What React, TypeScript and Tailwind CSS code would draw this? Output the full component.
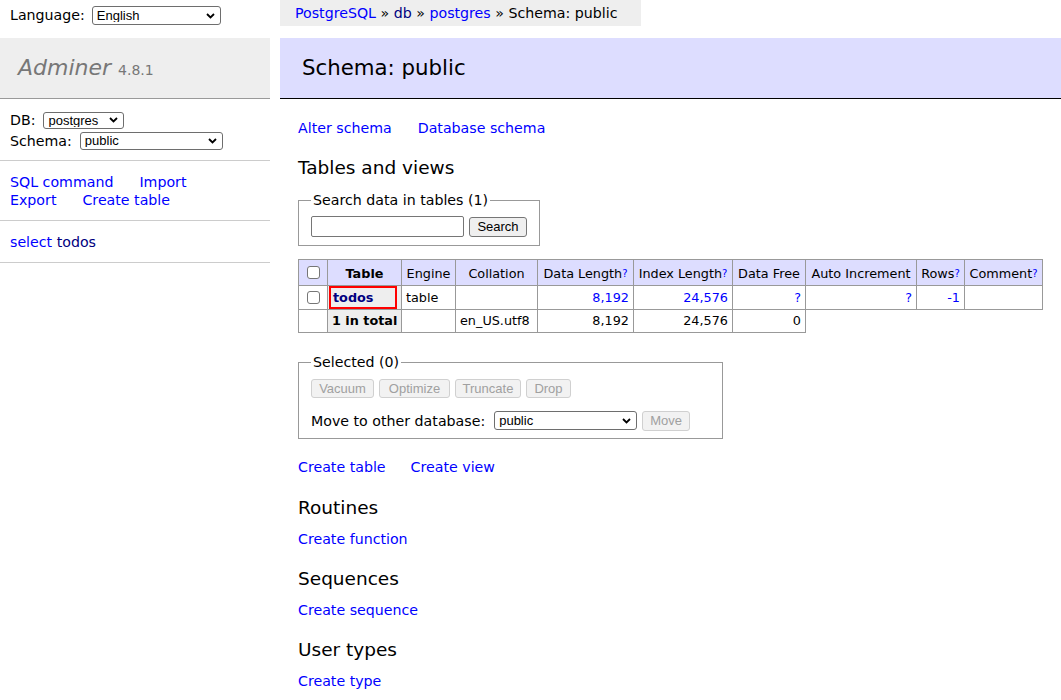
import React from 'react';

// Adminer "Schema: public" page

const ctl = "font-['Liberation_Sans',Arial,sans-serif] text-[13px]";

function Select({ value, className }: { value: string; className: string }) {
  return (
    <span className="relative inline-block align-middle">
      <select
        defaultValue={value}
        className={`appearance-none block bg-white border border-[#6e6e6e] rounded-[3px] pl-[4px] pr-[18px] leading-none text-black ${ctl} ${className}`}
      >
        <option>{value}</option>
      </select>
      <svg
        className="absolute right-[6px] top-1/2 -translate-y-1/2 pointer-events-none"
        width="9"
        height="6"
        viewBox="0 0 9 6"
      >
        <path d="M1 1l3.5 3.5L8 1" fill="none" stroke="#000" strokeWidth="1.8" />
      </svg>
    </span>
  );
}

function Button({ label, disabled, className }: { label: string; disabled?: boolean; className: string }) {
  return (
    <button
      disabled={disabled}
      className={`inline-flex items-center justify-center rounded-[3px] border align-middle ${ctl} ${
        disabled ? 'border-[#d0d0d0] text-[#a0a0a0] bg-[#f2f2f2]' : 'border-[#767676] text-black bg-[#efefef]'
      } ${className}`}
    >
      {label}
    </button>
  );
}

function Checkbox() {
  return (
    <input
      type="checkbox"
      className="appearance-none block w-[13px] h-[13px] border border-[#767676] rounded-[3px] bg-white"
    />
  );
}

const Help = () => <sup className="text-[#00f] text-[10px] relative -top-[1px]">?</sup>;

export default function App() {
  const td = 'border border-[#999] px-[4px] py-0';
  const num = `${td} text-right text-[#00f]`;

  return (
    <div className="flex min-h-[700px] w-[1061px] bg-white text-black text-[14.2px] leading-[18px] font-['DejaVu_Sans',Verdana,sans-serif]">
      {/* ---- left menu ---- */}
      <div className="w-[270px] shrink-0 flex flex-col">
        <div className="h-[38px] flex items-start gap-[7px] pt-[6px] px-[10px]">
          <span className="leading-[19px]">Language:</span>
          <Select value="English" className="w-[129px] h-[19px]" />
        </div>

        <div className="h-[61px] bg-[#eee] border-b border-[#999] flex items-center px-[18px] text-[#777]">
          <span className="italic text-[22px]">Adminer</span>
          <span className="text-[14px] ml-[7px] mt-[4px]">4.8.1</span>
        </div>

        <div className="pt-[12px] pb-[10px] px-[10px] border-b border-[#ccc] flex flex-col gap-[2px]">
          <div className="flex items-center h-[18px] gap-[8px]">
            DB: <Select value="postgres" className="w-[81px] h-[17px]" />
          </div>
          <div className="flex items-center h-[19px] gap-[8px]">
            Schema: <Select value="public" className="w-[143px] h-[18px]" />
          </div>
        </div>

        <div className="pt-[12px] pb-[11px] px-[10px] border-b border-[#ccc]">
          <div className="flex gap-[26px]">
            <a className="text-[#00f]">SQL command</a>
            <a className="text-[#00f]">Import</a>
          </div>
          <div className="flex gap-[26px]">
            <a className="text-[#00f]">Export</a>
            <a className="text-[#00f]">Create table</a>
          </div>
        </div>

        <div className="pt-[12px] pb-[11px] px-[10px] border-b border-[#ccc]">
          <a className="text-[#00f]">select</a> <a className="text-[#000080]">todos</a>
        </div>
      </div>

      {/* ---- content ---- */}
      <div className="flex-1 ml-[10px] flex flex-col items-start">
        <div className="h-[26px] w-[361px] bg-[#eee] flex items-center px-[15px] whitespace-nowrap">
          <a className="text-[#00f]">PostgreSQL</a>&nbsp;»&nbsp;<a className="text-[#000080]">db</a>&nbsp;»&nbsp;
          <a className="text-[#00f]">postgres</a>&nbsp;» Schema: public
        </div>

        <h2 className="mt-[12px] self-stretch h-[61px] bg-[#ddf] border-b border-black flex items-center px-[22px] text-[21.3px]">
          Schema: public
        </h2>

        <div className="pl-[18px] flex flex-col items-start">
          <div className="mt-[20px] flex gap-[26px]">
            <a className="text-[#00f]">Alter schema</a>
            <a className="text-[#00f]">Database schema</a>
          </div>

          <h3 className="mt-[19px] text-[18.5px] leading-[23px]">Tables and views</h3>

          <fieldset className="mt-[12px] border border-[#999] px-[12px] pb-[8px] w-[242px]">
            <legend className="px-[2px] leading-[18px]">Search data in tables (1)</legend>
            <div className="mt-[7px] flex items-center gap-[5px]">
              <input className={`w-[153px] h-[21px] border border-[#767676] rounded-[2px] bg-white text-black ${ctl}`} />
              <Button label="Search" className="w-[58px] h-[20px]" />
            </div>
          </fieldset>

          <table className="mt-[13px] table-fixed border-collapse w-[744px] text-[12.8px]">
            <colgroup>
              <col className="w-[29px]" />
              <col className="w-[74px]" />
              <col className="w-[54px]" />
              <col className="w-[82px]" />
              <col className="w-[96px]" />
              <col className="w-[99px]" />
              <col className="w-[73px]" />
              <col className="w-[111px]" />
              <col className="w-[48px]" />
              <col className="w-[78px]" />
            </colgroup>
            <thead>
              <tr className="h-[26px] bg-[#ddf]">
                <td className={td}>
                  <div className="flex justify-center"><Checkbox /></div>
                </td>
                <th className={`${td} font-bold text-center pt-[3px]`}>Table</th>
                <th className={`${td} font-normal text-center pt-[3px]`}>Engine</th>
                <th className={`${td} font-normal text-center pt-[3px]`}>Collation</th>
                <th className={`${td} font-normal text-center whitespace-nowrap pt-[3px]`}>Data Length<Help /></th>
                <th className={`${td} font-normal text-center whitespace-nowrap pt-[3px]`}>Index Length<Help /></th>
                <th className={`${td} font-normal text-center whitespace-nowrap pt-[3px]`}>Data Free</th>
                <th className={`${td} font-normal text-center whitespace-nowrap pt-[3px]`}>Auto Increment</th>
                <th className={`${td} font-normal text-center whitespace-nowrap pt-[3px]`}>Rows<Help /></th>
                <th className={`${td} font-normal text-center whitespace-nowrap pt-[3px]`}>Comment<Help /></th>
              </tr>
            </thead>
            <tbody>
              <tr className="h-[24px]">
                <td className={td}>
                  <div className="flex justify-center"><Checkbox /></div>
                </td>
                <th className="border border-[#999] p-0 bg-[#eee] text-left align-top">
                  <div className="ml-[1px] w-[68px] h-[23px] border-2 border-[#f00] flex items-center pl-[2px]">
                    <a className="text-[#000080] font-bold">todos</a>
                  </div>
                </th>
                <td className={td}>table</td>
                <td className={td}></td>
                <td className={num}>8,192</td>
                <td className={num}>24,576</td>
                <td className={num}>?</td>
                <td className={num}>?</td>
                <td className={num}>-1</td>
                <td className={td}></td>
              </tr>
              <tr className="h-[23px]">
                <td className={td}></td>
                <th className={`${td} bg-[#eee] text-left font-bold whitespace-nowrap`}>1 in total</th>
                <td className={td}></td>
                <td className={td}>en_US.utf8</td>
                <td className={`${td} text-right`}>8,192</td>
                <td className={`${td} text-right`}>24,576</td>
                <td className={`${td} text-right`}>0</td>
              </tr>
            </tbody>
          </table>

          <fieldset className="mt-[20px] border border-[#999] px-[12px] pb-[7px] w-[425px]">
            <legend className="px-[2px] leading-[18px]">Selected (0)</legend>
            <div className="mt-[8px] flex gap-[5px]">
              <Button label="Vacuum" disabled className="w-[63px] h-[19px]" />
              <Button label="Optimize" disabled className="w-[71px] h-[19px]" />
              <Button label="Truncate" disabled className="w-[66px] h-[19px]" />
              <Button label="Drop" disabled className="w-[45px] h-[19px]" />
            </div>
            <div className="mt-[12px] flex items-center h-[21px]">
              <span>Move to other database:</span>
              <span className="ml-[9px]"><Select value="public" className="w-[143px] h-[19px]" /></span>
              <Button label="Move" disabled className="ml-[5px] w-[48px] h-[20px]" />
            </div>
          </fieldset>

          <div className="mt-[19px] flex gap-[25px]">
            <a className="text-[#00f]">Create table</a>
            <a className="text-[#00f]">Create view</a>
          </div>

          <h3 className="mt-[20px] text-[18.5px] leading-[23px]">Routines</h3>
          <a className="mt-[11px] text-[#00f]">Create function</a>

          <h3 className="mt-[19px] text-[18.5px] leading-[23px]">Sequences</h3>
          <a className="mt-[11px] text-[#00f]">Create sequence</a>

          <h3 className="mt-[19px] text-[18.5px] leading-[23px]">User types</h3>
          <a className="mt-[11px] text-[#00f]">Create type</a>
        </div>
      </div>
    </div>
  );
}
